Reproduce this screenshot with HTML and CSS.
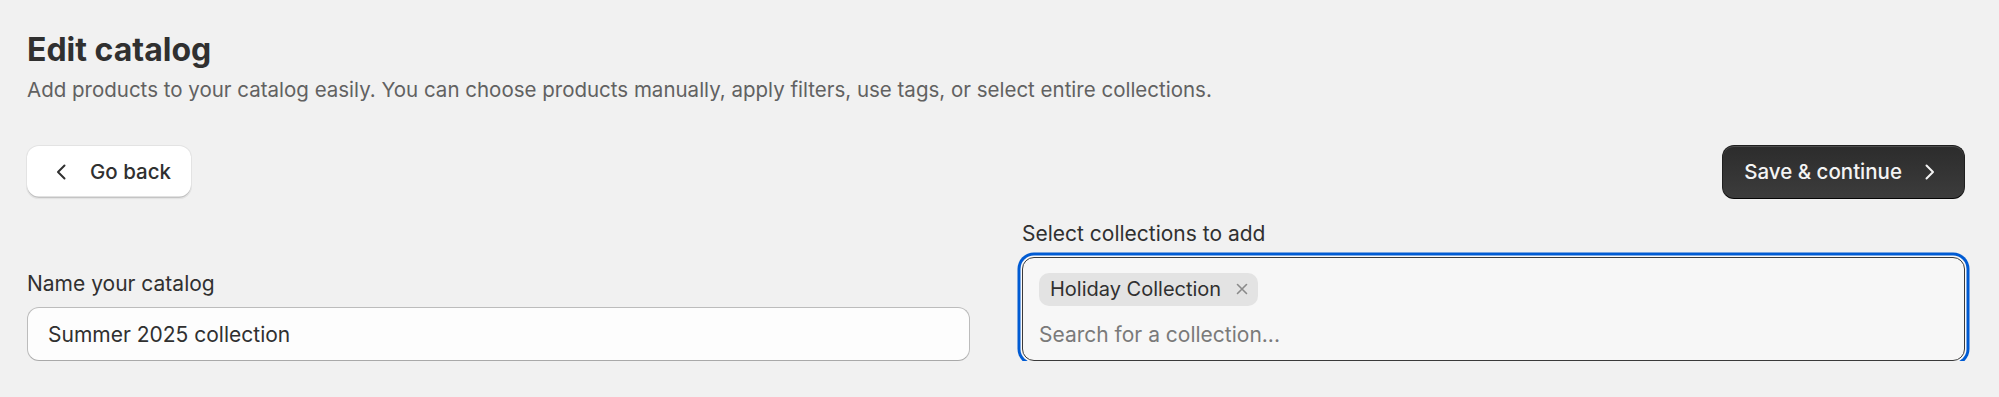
FILE: index.html
```html
<!DOCTYPE html>
<html lang="en">
<head>
    <meta charset="UTF-8">
    <meta name="viewport" content="width=device-width, initial-scale=1.0">
    <title>Edit catalog</title>
    <link rel="stylesheet" href="styles.css">
</head>
<body>
    <div class="page">
        <header class="page-header">
            <h1 class="title">Edit catalog</h1>
            <p class="subtitle">Add products to your catalog easily. You can choose products manually, apply filters, use tags, or select entire collections.</p>
        </header>

        <div class="actions">
            <button class="btn btn-back" type="button">
                <svg class="btn-icon" viewBox="0 0 20 20" width="20" height="20">
                    <polyline points="12.5,3.5 6,10 12.5,16.5" fill="none" stroke="currentColor" stroke-width="2" stroke-linecap="round" stroke-linejoin="round"/>
                </svg>
                Go back
            </button>
            <button class="btn btn-primary" type="button">
                Save &amp; continue
                <svg class="btn-icon" viewBox="0 0 20 20" width="20" height="20">
                    <polyline points="7.5,3.5 14,10 7.5,16.5" fill="none" stroke="currentColor" stroke-width="2" stroke-linecap="round" stroke-linejoin="round"/>
                </svg>
            </button>
        </div>

        <form class="catalog-form" action="">
            <div class="field">
                <label class="field-label" for="catalog-name">Name your catalog</label>
                <input class="text-input" id="catalog-name" type="text" value="Summer 2025 collection">
            </div>
            <div class="field">
                <label class="field-label" for="collection-search">Select collections to add</label>
                <div class="tag-box">
                    <div class="tags">
                        <span class="tag">
                            Holiday Collection
                            <span class="tag-remove">
                                <svg viewBox="0 0 12 12" width="12" height="12">
                                    <path d="M1.5 1.5 L10.5 10.5 M10.5 1.5 L1.5 10.5" fill="none" stroke="currentColor" stroke-width="1.6" stroke-linecap="round"/>
                                </svg>
                            </span>
                        </span>
                    </div>
                    <input class="tag-search" id="collection-search" type="text" placeholder="Search for a collection...">
                </div>
            </div>
        </form>
    </div>
</body>
</html>
```

FILE: styles.css
```css
* {
    box-sizing: border-box;
    margin: 0;
    padding: 0;
}
body {
    background-color: #f1f1f1;
    font-family: "Inter", "Noto Sans", sans-serif;
    color: #303030;
}
.page {
    padding: 30px 34px 0 27px;
}
.page-header .title {
    font-size: 32px;
    line-height: 40px;
    font-weight: 700;
    color: #303030;
}
.page-header .subtitle {
    margin-top: 6px;
    font-size: 20.5px;
    line-height: 28px;
    color: #616161;
}
.actions {
    display: flex;
    align-items: center;
    justify-content: space-between;
    margin-top: 41px;
}
.btn {
    display: flex;
    align-items: center;
    font-family: inherit;
    font-size: 20.5px;
    line-height: 28px;
    font-weight: 500;
    border: none;
    border-radius: 12px;
    cursor: pointer;
}
.btn .btn-icon {
    flex: none;
}
.btn-back {
    gap: 18px;
    padding: 12px 20px 12px 25px;
    background-color: #ffffff;
    color: #303030;
    box-shadow: 0 0 0 1px #e3e3e3, inset 0 -1.5px 0 #c4c4c4, 0 1px 1px rgba(0, 0, 0, 0.08);
}
.btn-primary {
    gap: 17px;
    padding: 12px 25px 12px 21px;
    background: linear-gradient(#2c2c2c, #3c3c3c);
    color: #f4f4f4;
    border: 1px solid #1f1f1f;
    border-bottom-color: #050505;
    box-shadow: inset 0 1px 0 rgba(255, 255, 255, 0.16);
}
.catalog-form {
    display: grid;
    grid-template-columns: 1fr 1fr;
    column-gap: 52px;
    align-items: end;
    margin-top: 21px;
}
.field {
    display: flex;
    flex-direction: column;
}
.field-label {
    font-size: 21px;
    line-height: 28px;
    margin-bottom: 9px;
    color: #303030;
}
.text-input {
    width: 100%;
    font-family: inherit;
    font-size: 21px;
    line-height: 28px;
    padding: 13px 20px 11px;
    color: #303030;
    background-color: #fdfdfd;
    border: 1px solid #bcbcbc;
    border-bottom-color: #a9a9a9;
    border-radius: 12px;
    outline: none;
}
.tag-box {
    display: flex;
    flex-direction: column;
    gap: 15px;
    padding: 14.5px 16px 11px;
    background-color: #f7f7f7;
    border: 1.5px solid #3a3a3a;
    border-radius: 12px;
    box-shadow: 0 0 0 1.5px #fafafa, 0 0 0 4.5px #005bd3;
}
.tags {
    display: flex;
    gap: 8px;
}
.tag {
    display: flex;
    align-items: center;
    gap: 15px;
    padding: 3px 10px 3px 11px;
    font-size: 20px;
    line-height: 27px;
    background-color: #e3e3e3;
    border-radius: 10px;
    color: #303030;
}
.tag-remove {
    display: flex;
    color: #8a8a8a;
}
.tag-search {
    width: 100%;
    font-family: inherit;
    font-size: 21px;
    line-height: 28px;
    color: #303030;
    background: transparent;
    border: none;
    outline: none;
}
.tag-search::placeholder {
    color: #7a7a7a;
}
```
